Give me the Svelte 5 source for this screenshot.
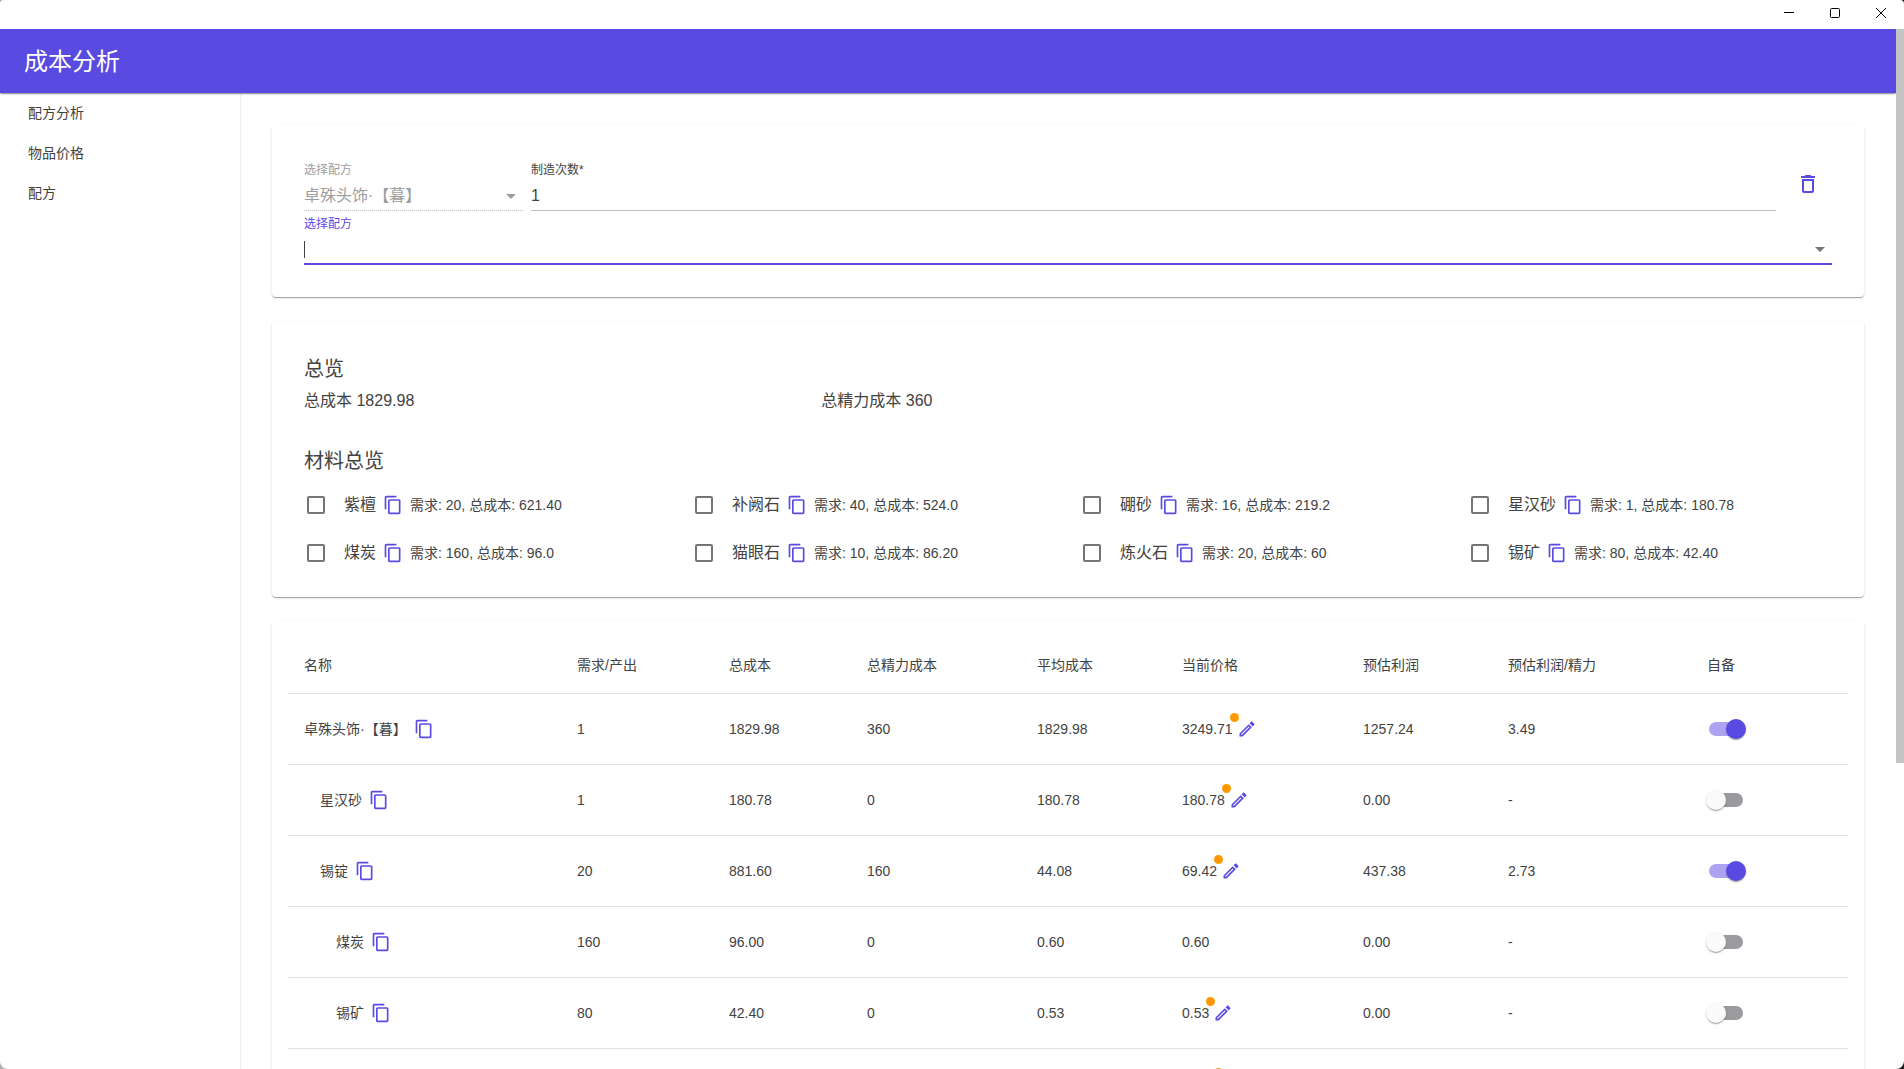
<script>
  const navItems = ['配方分析', '物品价格', '配方'];

  const materials = [
    { name: '紫檀', need: '20', cost: '621.40' },
    { name: '补阙石', need: '40', cost: '524.0' },
    { name: '硼砂', need: '16', cost: '219.2' },
    { name: '星汉砂', need: '1', cost: '180.78' },
    { name: '煤炭', need: '160', cost: '96.0' },
    { name: '猫眼石', need: '10', cost: '86.20' },
    { name: '炼火石', need: '20', cost: '60' },
    { name: '锡矿', need: '80', cost: '42.40' },
  ];

  const headers = ['名称', '需求/产出', '总成本', '总精力成本', '平均成本', '当前价格', '预估利润', '预估利润/精力', '自备'];

  let rows = $state([
    { name: '卓殊头饰·【暮】', level: 0, need: '1', cost: '1829.98', energy: '360', avg: '1829.98', price: '3249.71', editable: true, profit: '1257.24', perEnergy: '3.49', own: true },
    { name: '星汉砂', level: 1, need: '1', cost: '180.78', energy: '0', avg: '180.78', price: '180.78', editable: true, profit: '0.00', perEnergy: '-', own: false },
    { name: '锡锭', level: 1, need: '20', cost: '881.60', energy: '160', avg: '44.08', price: '69.42', editable: true, profit: '437.38', perEnergy: '2.73', own: true },
    { name: '煤炭', level: 2, need: '160', cost: '96.00', energy: '0', avg: '0.60', price: '0.60', editable: false, profit: '0.00', perEnergy: '-', own: false },
    { name: '锡矿', level: 2, need: '80', cost: '42.40', energy: '0', avg: '0.53', price: '0.53', editable: true, profit: '0.00', perEnergy: '-', own: false },
    { name: '紫檀', level: 2, need: '20', cost: '621.40', energy: '0', avg: '31.07', price: '31.07', editable: true, profit: '0.00', perEnergy: '-', own: false },
  ]);
</script>

{#snippet copyButton(name)}
  <button class="icon-btn" type="button" aria-label={`复制 ${name}`}>
    <svg viewBox="0 0 24 24" aria-hidden="true">
      <path d="M16 1H4c-1.1 0-2 .9-2 2v14h2V3h12V1zm3 4H8c-1.1 0-2 .9-2 2v14c0 1.1.9 2 2 2h11c1.1 0 2-.9 2-2V7c0-1.1-.9-2-2-2zm0 16H8V7h11v14z" />
    </svg>
  </button>
{/snippet}

{#snippet dropArrow()}
  <svg class="arrow" viewBox="0 0 24 24" aria-hidden="true"><path d="M7 10l5 5 5-5z" /></svg>
{/snippet}

<div class="window">
  <div class="titlebar">
    <button type="button" aria-label="最小化">
      <svg viewBox="0 0 10 10" aria-hidden="true"><path d="M0 4.5H10" /></svg>
    </button>
    <button type="button" aria-label="最大化">
      <svg viewBox="0 0 10 10" aria-hidden="true"><rect x=".5" y=".5" width="9" height="9" rx="1" /></svg>
    </button>
    <button type="button" aria-label="关闭">
      <svg viewBox="0 0 10 10" aria-hidden="true"><path d="M0 0L10 10M10 0L0 10" /></svg>
    </button>
  </div>

  <div class="viewport">
    <div class="app">
      <header class="appbar"><h1>成本分析</h1></header>
      <div class="body">
        <nav class="drawer">
          {#each navItems as item}
            <a href="#/">{item}</a>
          {/each}
        </nav>

        <main>
          <section class="card">
            <div class="recipe-row">
              <div class="field picked disabled">
                <label for="picked">选择配方</label>
                <div class="control">
                  <select id="picked" disabled>
                    <option>卓殊头饰·【暮】</option>
                  </select>
                  {@render dropArrow()}
                </div>
              </div>
              <div class="field times">
                <label for="times">制造次数*</label>
                <div class="control"><input id="times" type="text" inputmode="numeric" value="1" /></div>
              </div>
              <button class="delete" type="button" aria-label="删除">
                <svg viewBox="0 0 24 24" aria-hidden="true">
                  <path d="M6 19c0 1.1.9 2 2 2h8c1.1 0 2-.9 2-2V7H6v12zM8 9h8v10H8V9zm7.5-5l-1-1h-5l-1 1H5v2h14V4z" />
                </svg>
              </button>
            </div>
            <div class="field focused">
              <label for="recipe">选择配方</label>
              <div class="control">
                <span class="caret"></span>
                <input id="recipe" type="text" />
                {@render dropArrow()}
              </div>
            </div>
          </section>

          <section class="card overview">
            <h2>总览</h2>
            <div class="totals">
              <p>总成本 1829.98</p>
              <p>总精力成本 360</p>
            </div>
            <h2>材料总览</h2>
            <div class="materials">
              {#each materials as m, i}
                <div class="material">
                  <input type="checkbox" id={`material-${i}`} />
                  <label for={`material-${i}`}>{m.name}</label>
                  {@render copyButton(m.name)}
                  <span>需求: {m.need}, 总成本: {m.cost}</span>
                </div>
              {/each}
            </div>
          </section>

          <section class="card table-card">
            <table>
              <colgroup>
                <col class="c-name" /><col class="c-need" /><col class="c-cost" /><col class="c-energy" />
                <col class="c-avg" /><col class="c-price" /><col class="c-profit" /><col class="c-per" /><col class="c-own" />
              </colgroup>
              <thead>
                <tr>
                  {#each headers as h}<th scope="col">{h}</th>{/each}
                </tr>
              </thead>
              <tbody>
                {#each rows as row}
                  <tr>
                    <td>
                      <div class={`name level-${row.level}`}>
                        <span>{row.name}</span>
                        {@render copyButton(row.name)}
                      </div>
                    </td>
                    <td>{row.need}</td>
                    <td>{row.cost}</td>
                    <td>{row.energy}</td>
                    <td>{row.avg}</td>
                    <td>
                      {#if row.editable}
                        <div class="price">
                          <span class="amount">{row.price}<i class="badge"></i></span>
                          <button class="edit" type="button" aria-label={`编辑 ${row.name} 价格`}>
                            <svg viewBox="0 0 24 24" aria-hidden="true">
                              <path d="M14.06 9.02l.92.92L5.92 19H5v-.92l9.06-9.06M17.66 3c-.25 0-.51.1-.7.29l-1.83 1.83 3.75 3.75 1.83-1.83c.39-.39.39-1.02 0-1.41l-2.34-2.34c-.2-.2-.45-.29-.71-.29zm-3.6 3.19L3 17.25V21h3.75L17.81 9.94l-3.75-3.75z" />
                            </svg>
                          </button>
                        </div>
                      {:else}
                        {row.price}
                      {/if}
                    </td>
                    <td>{row.profit}</td>
                    <td>{row.perEnergy}</td>
                    <td>
                      <input class="switch" type="checkbox" role="switch" aria-label={`自备 ${row.name}`} bind:checked={row.own} />
                    </td>
                  </tr>
                {/each}
              </tbody>
            </table>
          </section>
        </main>
      </div>
    </div>
    <div class="scrollbar"><div class="thumb"></div></div>
  </div>
</div>

<style>
  :global(body) {
    background: linear-gradient(to right, #b0b0b0 50%, #1c1c1c 50%);
  }

  .window {
    --primary: #594ae2;
    --text: #424242;
    --line: #e0e0e0;
    --shadow: 0 2px 1px -1px rgba(0, 0, 0, 0.2), 0 1px 1px rgba(0, 0, 0, 0.14), 0 1px 3px rgba(0, 0, 0, 0.12);
    display: flex;
    flex-direction: column;
    height: 100vh;
    overflow: hidden;
    border-radius: 4px 4px 8px 8px;
    background: #fff;
    color: var(--text);
    font-family: 'Liberation Sans', 'Noto Sans CJK SC', sans-serif;
    font-size: 14px;
    line-height: 20px;
  }

  * {
    box-sizing: border-box;
    text-spacing-trim: space-all;
  }

  button,
  input,
  select {
    margin: 0;
    padding: 0;
    border: 0;
    background: none;
    color: inherit;
    font: inherit;
  }

  button {
    display: flex;
    align-items: center;
    justify-content: center;
    flex: none;
    cursor: pointer;
  }

  svg {
    display: block;
    fill: currentColor;
  }

  .titlebar {
    display: flex;
    justify-content: flex-end;
    flex: none;
    height: 29px;
    padding-bottom: 3px;
    color: #000;
  }

  .titlebar button {
    width: 46px;
  }

  .titlebar svg {
    width: 10px;
    height: 10px;
    fill: none;
    stroke: currentColor;
    stroke-width: 1;
  }

  .viewport {
    display: flex;
    flex: 1;
    min-height: 0;
  }

  .app {
    display: flex;
    flex-direction: column;
    flex: 1;
    min-width: 0;
    overflow: hidden;
  }

  .scrollbar {
    flex: none;
    width: 8px;
  }

  .thumb {
    height: calc(100% * 12 / 17);
    background: #c4c4c4;
  }

  .appbar {
    display: flex;
    align-items: center;
    flex: none;
    height: 64px;
    padding: 2px 24px 0;
    background: var(--primary);
    color: #fff;
    box-shadow: var(--shadow);
    z-index: 1;
  }

  h1,
  h2,
  p {
    margin: 0;
    font-weight: 400;
  }

  h1 {
    font-size: 24px;
    line-height: 32px;
  }

  .body {
    display: flex;
    flex: 1;
    min-height: 0;
  }

  .drawer {
    display: flex;
    flex-direction: column;
    flex: none;
    width: 240px;
    box-shadow: var(--shadow);
    z-index: 0;
  }

  .drawer a {
    display: flex;
    align-items: center;
    height: 40px;
    padding: 0 28px;
    color: inherit;
    text-decoration: none;
  }

  main {
    display: flex;
    flex-direction: column;
    flex: 1;
    gap: 24px;
    min-width: 0;
    padding: 32px;
    overflow-y: auto;
    scrollbar-width: none;
  }

  .card {
    flex: none;
    padding: 32px;
    border-radius: 4px;
    background: #fff;
    box-shadow: var(--shadow);
  }

  .recipe-row {
    display: flex;
    align-items: center;
    gap: 8px;
  }

  .field {
    display: flex;
    flex-direction: column;
    height: 54px;
    padding-top: 4px;
    border-bottom: 1px solid #bdbdbd;
  }

  .field label {
    font-size: 12px;
    line-height: 18px;
  }

  .field.picked {
    width: 219px;
  }

  .field.times {
    flex: 1;
  }

  .field.disabled {
    border-bottom-style: dotted;
    color: #9e9e9e;
  }

  .field.focused {
    border-bottom: 2px solid var(--primary);
  }

  .field.focused label {
    color: var(--primary);
  }

  .control {
    display: flex;
    align-items: center;
    flex: 1;
    padding-top: 2px;
  }

  .control input,
  .control select {
    flex: 1;
    min-width: 0;
    height: 24px;
    outline: none;
    appearance: none;
    font-size: 16px;
    opacity: 1;
  }

  .caret {
    flex: none;
    width: 1px;
    height: 17px;
    background: var(--text);
  }

  .caret + input {
    caret-color: transparent;
  }

  .arrow {
    flex: none;
    width: 24px;
    height: 24px;
    color: #757575;
  }

  .disabled .arrow {
    color: #9e9e9e;
  }

  .delete {
    width: 48px;
    height: 48px;
    color: var(--primary);
  }

  .delete svg {
    width: 24px;
    height: 24px;
  }

  .overview {
    padding-bottom: 24px;
  }

  h2 {
    font-size: 20px;
    line-height: 32px;
  }

  .totals {
    display: grid;
    grid-template-columns: repeat(3, 1fr);
    gap: 24px;
    margin-bottom: 28px;
    font-size: 16px;
    line-height: 32px;
  }

  .materials {
    display: grid;
    grid-template-columns: repeat(4, 1fr);
    gap: 8px 24px;
    padding-top: 8px;
  }

  .material {
    display: flex;
    align-items: center;
    height: 40px;
  }

  .material label {
    font-size: 16px;
    line-height: 24px;
  }

  .material input {
    flex: none;
    width: 18px;
    height: 18px;
    margin: 0 19px 0 3px;
    border: 2px solid #757575;
    border-radius: 2px;
    appearance: none;
  }

  .material input:checked {
    border-color: var(--primary);
    background: var(--primary);
  }

  .icon-btn {
    width: 34px;
    height: 32px;
    color: var(--primary);
  }

  .icon-btn svg,
  .edit svg {
    width: 20px;
    height: 20px;
  }

  .table-card {
    padding: 16px;
  }

  table {
    width: 100%;
    border-collapse: separate;
    border-spacing: 0;
    table-layout: fixed;
  }

  .c-name { width: 273px; }
  .c-need { width: 152px; }
  .c-cost { width: 138px; }
  .c-energy { width: 170px; }
  .c-avg { width: 145px; }
  .c-price { width: 181px; }
  .c-profit { width: 145px; }
  .c-per { width: 199px; }
  .c-own { width: 157px; }

  th,
  td {
    height: 71px;
    padding: 0 16px;
    border-bottom: 1px solid var(--line);
    font-weight: 400;
    text-align: left;
    vertical-align: middle;
  }

  th {
    height: 57px;
  }

  .name,
  .price {
    display: flex;
    align-items: center;
  }

  .level-1 {
    padding-left: 16px;
  }

  .level-2 {
    padding-left: 32px;
  }

  .amount {
    position: relative;
  }

  .badge {
    position: absolute;
    top: -6px;
    right: -6px;
    width: 9px;
    height: 9px;
    border-radius: 50%;
    background: #ff9800;
  }

  .edit {
    margin-left: 4px;
    color: var(--primary);
  }

  .switch {
    display: flex;
    align-items: center;
    width: 34px;
    height: 14px;
    margin-left: 2px;
    border-radius: 7px;
    background: #9b9b9f;
    appearance: none;
    cursor: pointer;
  }

  .switch::before {
    content: '';
    flex: none;
    width: 20px;
    height: 20px;
    margin-left: -3px;
    border-radius: 50%;
    background: #fafafa;
    box-shadow: var(--shadow);
  }

  .switch:checked {
    background: #aca4f0;
  }

  .switch:checked::before {
    margin-left: 17px;
    background: var(--primary);
  }
</style>
